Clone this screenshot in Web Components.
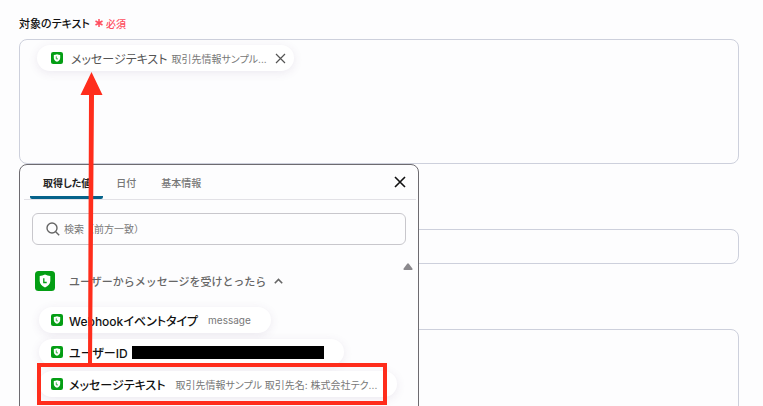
<!DOCTYPE html>
<html lang="ja">
<head>
<meta charset="utf-8">
<title>対象のテキスト</title>
<style>
  body {
    margin: 0;
    height: 100vh;
    overflow: hidden;
    background: #fdfdfe;
    color: #222;
    font-family: Inter, "Noto Sans CJK JP", sans-serif;
    font-size: 10px;
    font-feature-settings: "palt";
    --line: #cdd0dc;
    --muted: #777;
    --accent: #05628a;
    --mark: #ff2d1c;
  }
</style>
</head>
<body>
<flow-form>
  <form-field label="対象のテキスト" required>
    <token-box>
      <value-chip name="メッセージテキスト" sample="取引先情報サンプル..." removable></value-chip>
    </token-box>
    <value-picker slot="popup">
      <value-group label="ユーザーからメッセージを受けとったら">
        <value-chip name="Webhookイベントタイプ" sample="message" bold></value-chip>
        <value-chip name="ユーザーID" redacted bold></value-chip>
        <value-chip name="メッセージテキスト" sample="取引先情報サンプル 取引先名: 株式会社テク..." bold marked></value-chip>
      </value-group>
    </value-picker>
  </form-field>
  <text-field></text-field>
  <text-field multiline></text-field>
  <drag-arrow></drag-arrow>
</flow-form>

<script>
const define = (name, markup, setup) => {
  const template = document.createElement('template')
  template.innerHTML = markup

  customElements.define(
    name,
    class extends HTMLElement {
      constructor() {
        super()
        this.attachShadow({ mode: 'open' }).appendChild(
          template.content.cloneNode(true),
        )
        if (setup) setup(this, s => this.shadowRoot.querySelector(s))
      }
    },
  )
}

define('line-badge', `
  <style>
    :host { display: block; flex: none; width: var(--badge, 12px); height: var(--badge, 12px); }
    svg { display: block; width: 100%; height: 100%; }
  </style>
  <svg viewBox="0 0 20 20" aria-hidden="true">
    <rect width="20" height="20" rx="3.500" fill="#049e14"/>
    <path d="M10 3.600C8.300 4.500 6.500 4.900 4.700 4.900V10c0 3 2.100 5 5.300 6.400 3.200-1.400 5.300-3.400 5.300-6.400V4.900C13.500 4.900 11.700 4.500 10 3.600Z" fill="#fff"/>
    <path d="M8.800 7.200v4.300h2.900" fill="none" stroke="#049e14" stroke-width="1.300"/>
  </svg>
`)

define('value-chip', `
  <style>
    :host { display: block; width: fit-content; max-width: 100%; }
    .chip {
      display: flex;
      align-items: center;
      height: 26px;
      box-sizing: border-box;
      padding: 0 20px 0 12px;
      border-radius: 13px;
      background: #fff;
      box-shadow: 0 2px 10px rgba(90, 60, 120, 0.1);
      white-space: nowrap;
    }
    button { font: inherit; color: inherit; border: 0; padding: 0; background: none; }
    .name {
      display: flex;
      align-items: center;
      gap: 6px;
      font-size: 12px;
      color: #555;
      font-feature-settings: inherit;
    }
    .sample { margin-left: 10px; color: var(--muted); }
    .redaction { display: none; width: 192px; height: 13px; margin-left: 4px; background: #000; }
    .remove { display: none; margin-left: 8px; }
    .remove svg { display: block; width: 11px; height: 11px; }
    :host([bold]) .name { font-weight: 500; color: #111; }
    :host([redacted]) .redaction { display: block; }
    :host([redacted]) .sample { display: none; }
    :host([removable]) .chip { padding: 0 8px 0 14px; }
    :host([removable]) .name { gap: 8px; }
    :host([removable]) .sample { margin-left: 4px; }
    :host([removable]) .remove { display: block; }
    :host([marked]) { position: relative; }
    /* highlight frame lies over the neighbouring rows */
    :host([marked])::after {
      content: '';
      position: absolute;
      inset: -8px 10px -8px -2px;
      border: 4px solid var(--mark);
      pointer-events: none;
    }
  </style>
  <div class="chip">
    <button class="name" type="button"><line-badge></line-badge><span class="label"></span></button>
    <span class="sample"></span>
    <span class="redaction"></span>
    <button class="remove" type="button" aria-label="削除">
      <svg viewBox="0 0 11 11" fill="none" stroke="#555" stroke-width="1.200"><path d="M1 1l9 9M10 1l-9 9"/></svg>
    </button>
  </div>
`, (host, $) => {
  $('.label').textContent = host.getAttribute('name')
  $('.sample').textContent = host.getAttribute('sample') || ''
})

define('token-box', `
  <style>
    :host {
      display: block;
      box-sizing: border-box;
      min-height: 125px;
      padding: 5px 17px;
      border: 1px solid var(--line);
      border-radius: 8px;
    }
  </style>
  <div role="textbox" aria-label="対象のテキスト"><slot></slot></div>
`)

define('text-field', `
  <style>
    :host { display: block; }
    input, textarea {
      display: block;
      box-sizing: border-box;
      width: 100%;
      height: 35px;
      margin: 0;
      padding: 8px;
      border: 1px solid var(--line);
      border-radius: 8px;
      background: none;
      font: inherit;
      resize: none;
    }
    textarea { height: 125px; }
  </style>
`, host => {
  const multiline = host.hasAttribute('multiline')
  const control = document.createElement(multiline ? 'textarea' : 'input')
  control.setAttribute('aria-label', multiline ? '本文' : '値')
  host.shadowRoot.append(control)
})

define('form-field', `
  <style>
    :host { display: block; position: relative; }
    .label {
      display: flex;
      align-items: center;
      gap: 5px;
      height: 16px;
      margin-bottom: 8px;
      font-size: 11px;
      font-weight: 500;
      color: #111;
    }
    .required { display: none; align-items: center; gap: 3px; font-size: 10px; font-weight: 500; color: #ff4d5e; }
    .required svg { width: 8px; height: 8px; }
    :host([required]) .required { display: flex; }
    .popup { position: absolute; top: 100%; left: 0; z-index: 1; }
  </style>
  <div class="label">
    <span class="text"></span>
    <span class="required">
      <svg viewBox="0 0 8 8" stroke="#ff4d5e" stroke-width="1.500" aria-hidden="true"><path d="M4 0v8M.5 2l7 4M7.500 2l-7 4"/></svg>必須
    </span>
  </div>
  <slot></slot>
  <div class="popup"><slot name="popup"></slot></div>
`, (host, $) => {
  $('.text').textContent = host.getAttribute('label')
})

define('value-group', `
  <style>
    :host { display: block; }
    .head {
      --badge: 20px;
      display: flex;
      align-items: center;
      gap: 14px;
      height: 20px;
      margin: 0 0 16px;
      padding: 0 0 0 3px;
      border: 0;
      background: none;
      font: inherit;
      font-size: 11px;
      font-weight: 500;
      font-feature-settings: normal;
      color: #666;
    }
    .head svg { width: 9px; height: 6px; margin-left: -6px; }
    .items { display: flex; flex-direction: column; gap: 6px; padding-left: 7px; }
  </style>
  <button class="head" type="button" aria-expanded="true">
    <line-badge></line-badge>
    <span class="text"></span>
    <svg viewBox="0 0 9 6" fill="none" stroke="#666" stroke-width="1.600"><path d="M.8 5.200L4.500 1.500l3.700 3.700"/></svg>
  </button>
  <div class="items"><slot></slot></div>
`, (host, $) => {
  $('.text').textContent = host.getAttribute('label')
})

define('value-picker', `
  <style>
    :host {
      display: block;
      box-sizing: border-box;
      width: 400px;
      height: 320px;
      overflow: hidden;
      border: 1px solid #6d6b70;
      border-radius: 8px;
      background: #fdfdfe;
    }
    header {
      display: flex;
      align-items: stretch;
      height: 34px;
      margin: 0 2px 0 4px;
      padding: 0 10px 0 6px;
      border-bottom: 1px solid #e2e1e6;
    }
    button { font: inherit; border: 0; padding: 0; background: none; }
    .tab { padding: 0 12px 0 13px; font-weight: 500; color: var(--muted); }
    .tab[aria-selected='true'] {
      padding-top: 3px;
      border-bottom: 3px solid var(--accent);
      border-radius: 2px;
      font-weight: 700;
      color: #222;
    }
    [role='tablist'] { display: flex; flex: 1; }
    .close svg { display: block; width: 12px; height: 12px; }
    .search {
      display: flex;
      align-items: center;
      gap: 4px;
      height: 32px;
      box-sizing: border-box;
      margin: 13px 12px 0;
      padding: 0 13px;
      border: 1px solid #c8c7cc;
      border-radius: 6px;
    }
    .search svg { flex: none; width: 14px; height: 14px; }
    input {
      flex: 1;
      min-width: 0;
      padding: 0;
      border: 0;
      outline: 0;
      background: none;
      font: inherit;
      font-feature-settings: normal;
      color: #222;
    }
    input::placeholder { color: #777; opacity: 1; }
    .list { display: flex; align-items: flex-start; justify-content: space-between; padding: 18px 5px 0 12px; }
    .items { padding-top: 8px; }
    .up { display: block; width: 10px; height: 7px; }
  </style>
  <header>
    <div role="tablist">
      <button class="tab" role="tab" type="button" aria-selected="true">取得した値</button>
      <button class="tab" role="tab" type="button">日付</button>
      <button class="tab" role="tab" type="button">基本情報</button>
    </div>
    <button class="close" type="button" aria-label="閉じる">
      <svg viewBox="0 0 12 12" fill="none" stroke="#111" stroke-width="1.600"><path d="M1 1l10 10M11 1L1 11"/></svg>
    </button>
  </header>
  <label class="search">
    <svg viewBox="0 0 14 14" fill="none" stroke="#666" stroke-width="1.400"><circle cx="6" cy="6" r="5"/><path d="M9.700 9.700l3.500 3.500"/></svg>
    <input type="text" placeholder="検索（前方一致）" aria-label="検索">
  </label>
  <div class="list">
    <div class="items"><slot></slot></div>
    <svg class="up" viewBox="0 0 10 7" aria-hidden="true"><path d="M1.300 7Q0 7 .6 5.500L4 .9Q5-.3 6 .9L9.400 5.500Q10 7 8.700 7Z" fill="#8b898d"/></svg>
  </div>
`)

// Points from the picked row up to the chip it becomes
define('drag-arrow', `
  <style>
    :host { position: absolute; top: 72px; left: 80px; z-index: 2; pointer-events: none; }
    svg { display: block; width: 23px; height: 293px; }
  </style>
  <svg viewBox="0 0 23 293" fill="#ff2d1c" aria-hidden="true">
    <path d="M11.500 0L22.500 23H14L12 293H8L9 23H0.500Z"/>
  </svg>
`)

define('flow-form', `
  <style>
    :host { display: block; padding: 15px 24px 0 19px; }
    ::slotted(text-field) { margin-top: 65px; }
  </style>
  <slot></slot>
`)
</script>
</body>
</html>
